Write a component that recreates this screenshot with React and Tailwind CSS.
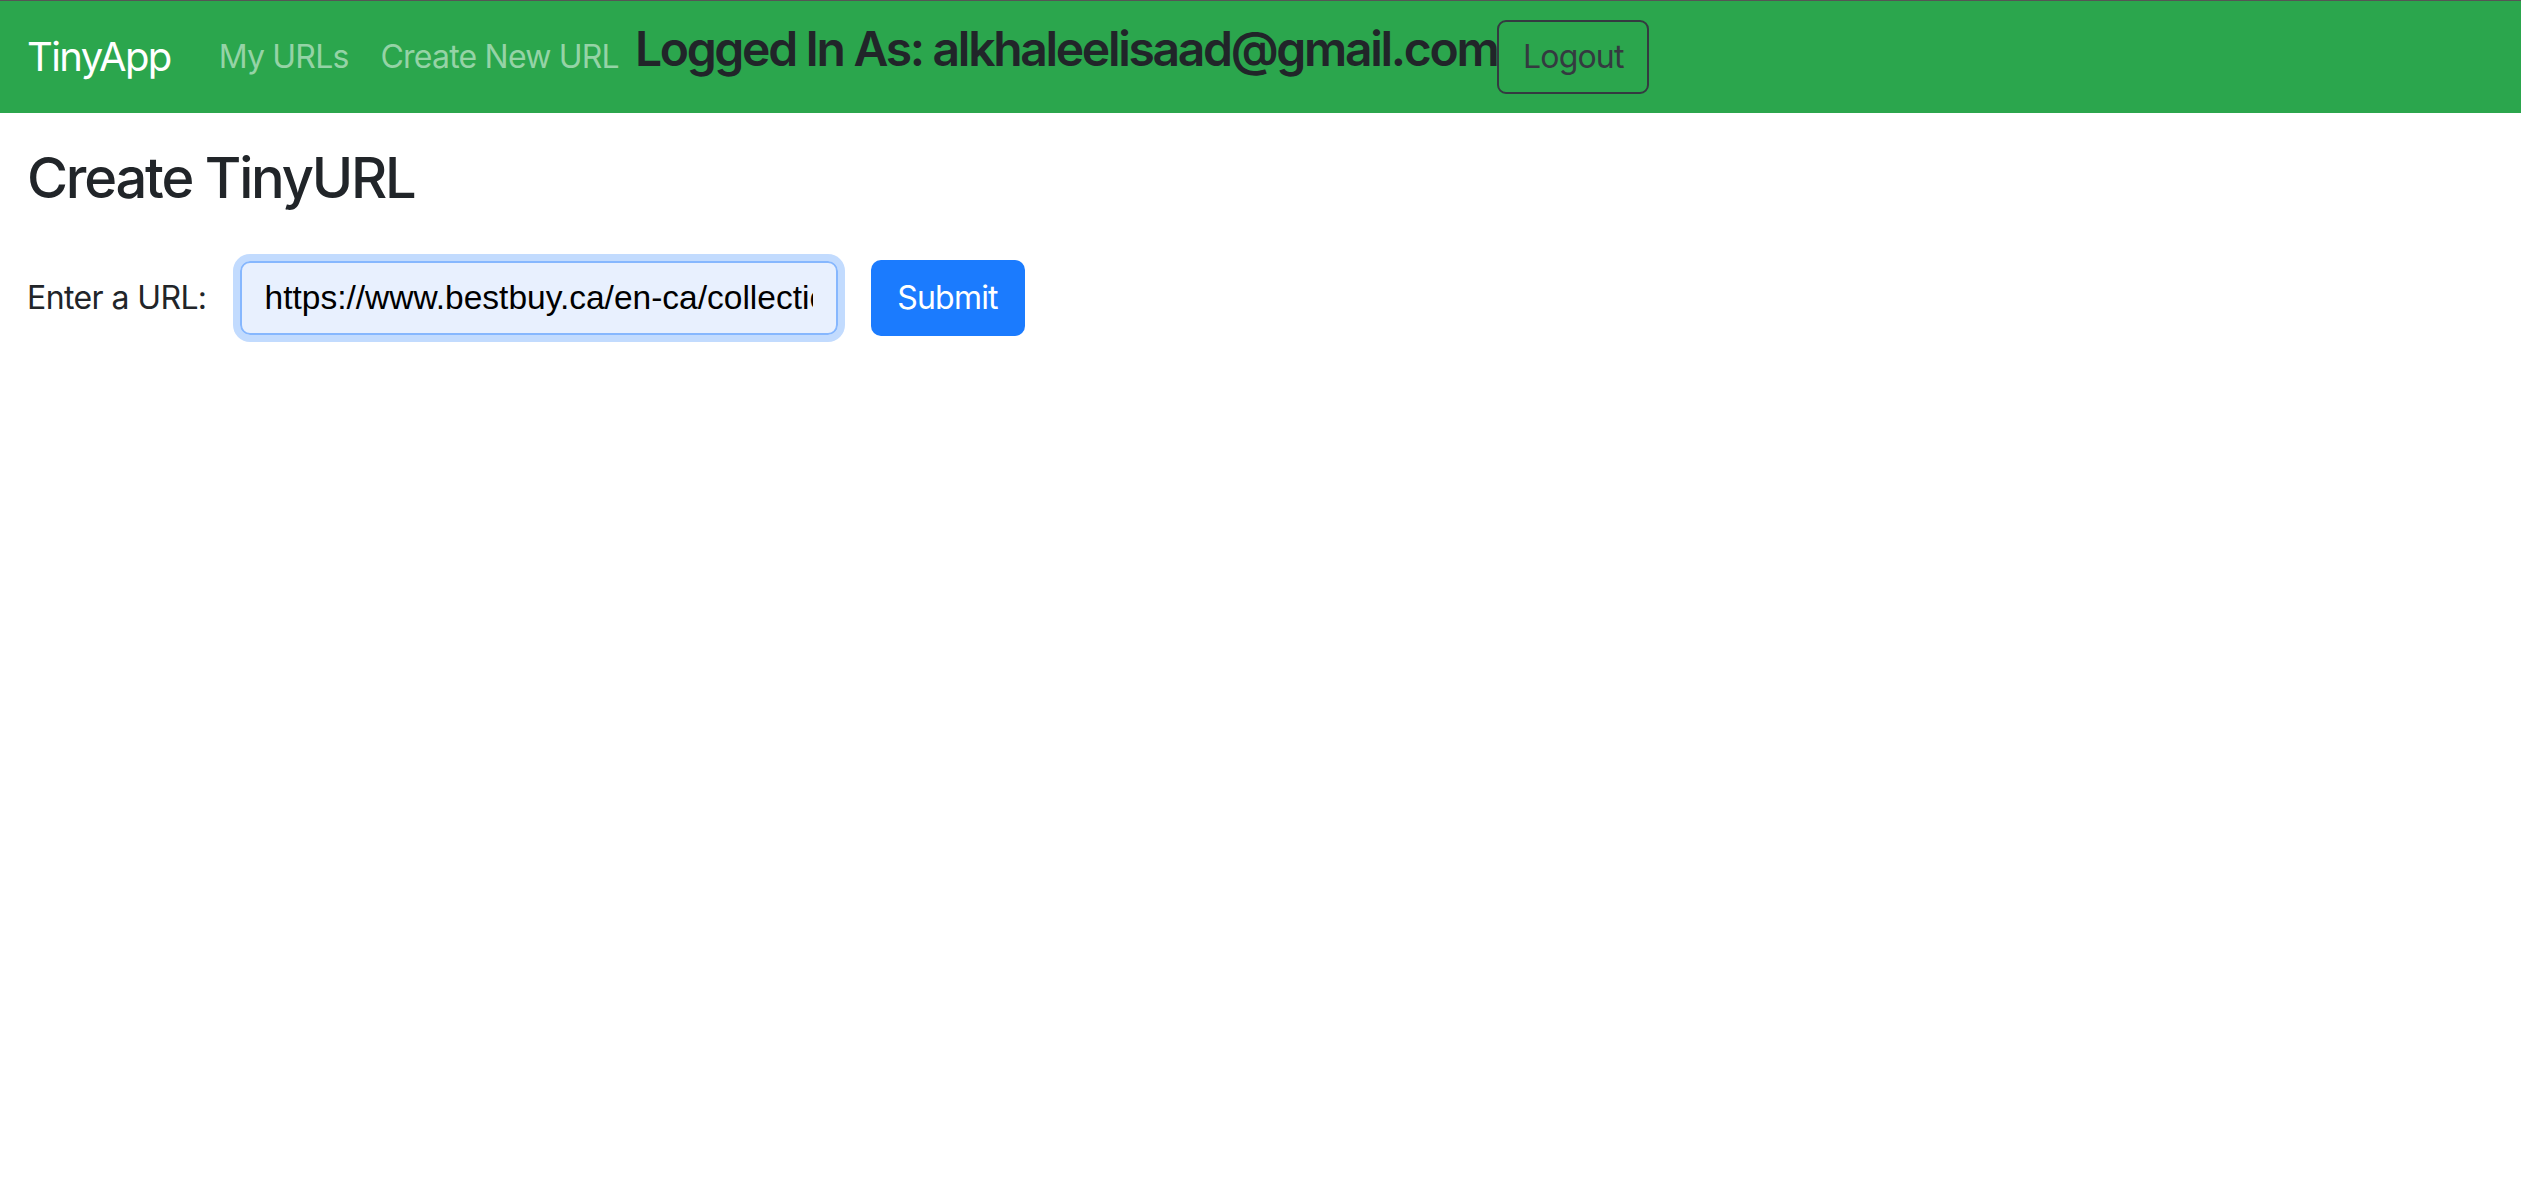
import React from "react";

export default function App() {
  return (
    <div className="min-h-screen bg-white" style={{ fontFamily: "Inter, 'Noto Sans', sans-serif" }}>
      <nav className="h-[113px] bg-[#2ba64d] border-t border-[#555555] flex items-center pl-[27px]">
        <a href="#" className="text-[40px] leading-[1.5] text-white mr-[32px] tracking-[-1.6px]">TinyApp</a>
        <div className="flex items-center">
          <a href="#" className="px-[16px] text-[32px] leading-[1.5] text-[#95d3a6] tracking-[-0.8px]">My URLs</a>
          <a href="#" className="px-[16px] text-[32px] leading-[1.5] text-[#95d3a6] tracking-[-0.8px]">Create New URL</a>
        </div>
        <h4 className="text-[48px] leading-[1.2] font-semibold text-[#212529] mb-[16px] tracking-[-2.3px]">
          Logged In As: alkhaleelisaad@gmail.com
        </h4>
        <button className="w-[152px] h-[74px] border-2 border-[#343a40] rounded-[9px] text-[32px] text-[#343a40] tracking-[-0.8px]">
          Logout
        </button>
      </nav>
      <main className="px-[27px] pt-[32px]">
        <h3 className="text-[56px] leading-[1.2] font-medium text-[#212529] tracking-[-2.2px]">Create TinyURL</h3>
        <form className="mt-[48px] flex items-center" onSubmit={(e) => e.preventDefault()}>
          <label className="text-[32px] leading-[1.5] text-[#212529] tracking-[-0.6px]">Enter a URL:</label>
          <div className="ml-[33px] w-[598px] h-[74px] rounded-[10px] shadow-[0_0_0_7px_#c2dbfe]">
            <input
              type="text"
              readOnly
              defaultValue="https://www.bestbuy.ca/en-ca/collection/laptops-on-sale/46082"
              className="w-full h-full border-2 border-[#86b7fe] rounded-[10px] bg-[#e8f0fe] px-[23px] text-[33.5px] text-black outline-none"
              style={{ fontFamily: "'Liberation Sans', Arial, sans-serif" }}
            />
          </div>
          <button className="ml-[33px] w-[154px] h-[76px] bg-[#1b7bfe] rounded-[10px] text-white text-[32px] tracking-[-0.8px]">
            Submit
          </button>
        </form>
      </main>
    </div>
  );
}
